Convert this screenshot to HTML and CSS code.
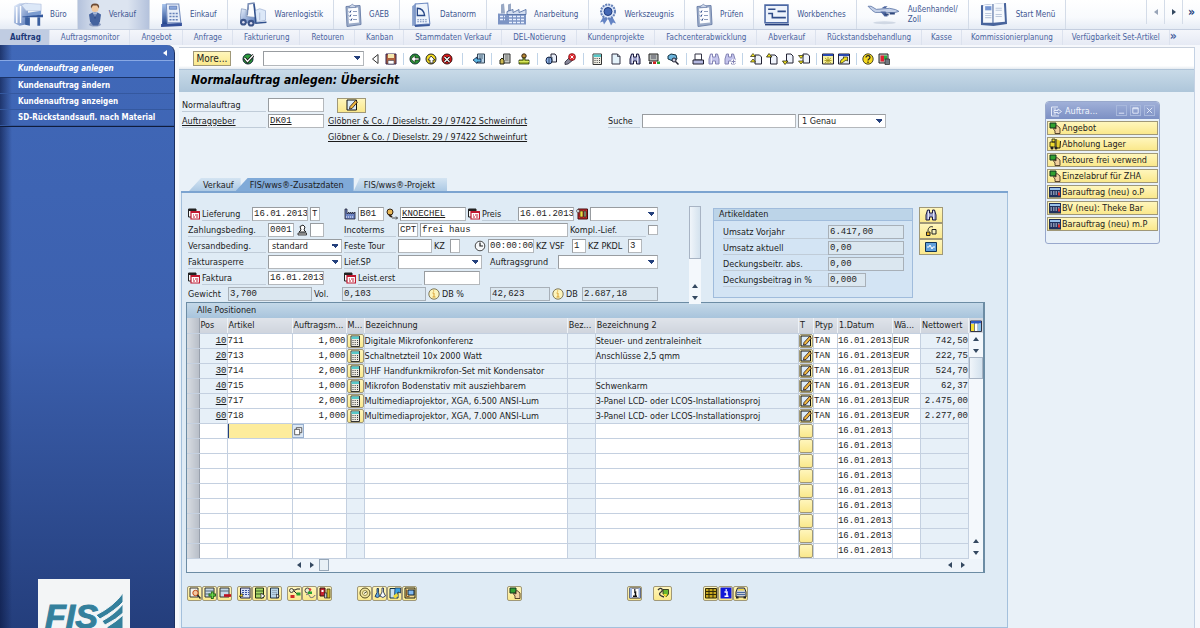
FILE: index.html
```
<!DOCTYPE html>
<html lang="de">

<head>
    <meta charset="UTF-8">
    <meta name="viewport" content="width=device-width, initial-scale=1.0">
    <title>Normalauftrag anlegen: Übersicht</title>
    <link rel="stylesheet" href="styles.css">
</head>

<body>
    <svg class="sprite" aria-hidden="true">
        <defs>
            <linearGradient id="steel" x1="0" y1="0" x2="1" y2="1">
                <stop offset="0" stop-color="#e8f0fc" />
                <stop offset="1" stop-color="#5678b8" />
            </linearGradient>
            <linearGradient id="navy" x1="0" y1="0" x2="0" y2="1">
                <stop offset="0" stop-color="#a8c4ec" />
                <stop offset="1" stop-color="#24468e" />
            </linearGradient>
        </defs>
        <!-- small icons -->
        <symbol id="i-ok" viewBox="0 0 12 12"><circle cx="6" cy="6" r="5" fill="#2c9c3c" stroke="#123" /><path d="M2.5 5l3 3.5 6-6.5" fill="none" stroke="#111" stroke-width="3" /><path d="M2.5 5l3 3.5 6-6.5" fill="none" stroke="#fff" stroke-width="1.3" /></symbol>
        <symbol id="i-prev" viewBox="0 0 12 12"><path d="M9 1.5v9L3.500 6z" fill="#fff" stroke="#333" /></symbol>
        <symbol id="i-save" viewBox="0 0 12 12"><path d="M1 1h10v10H1z" fill="#b0603c" stroke="#33204c" /><path d="M3 1h6v4H3z" fill="#f4e8b0" /><path d="M3 7.500h6V11H3z" fill="#fff" stroke="#445" stroke-width=".6" /></symbol>
        <symbol id="i-back" viewBox="0 0 12 12"><circle cx="6" cy="6" r="5" fill="#2b9432" stroke="#133" /><path d="M2 6l4-3.500V5h4v2H6v2.500z" fill="#fff" stroke="#111" stroke-width=".6" /></symbol>
        <symbol id="i-up" viewBox="0 0 12 12"><circle cx="6" cy="6" r="5" fill="#f4dc20" stroke="#222" /><path d="M6 3l4 4H8v3H5V7H3z" fill="#fff" stroke="#222" stroke-width=".8" /></symbol>
        <symbol id="i-cancel" viewBox="0 0 12 12"><circle cx="6" cy="6" r="5" fill="#e01818" stroke="#311" /><path d="M3.500 4l5 5m0-5l-5 5" stroke="#111" stroke-width="2.800" /><path d="M3.500 4l5 5m0-5l-5 5" stroke="#fff" stroke-width="1.200" /></symbol>
        <symbol id="i-session" viewBox="0 0 12 12"><path d="M4.500 1h7v9h-7z" fill="#b8d4e8" stroke="#345" /><path d="M6 3h4M6 5h4" stroke="#567" /><path d="M0 7l4-3v2h4v3H4v1.500z" fill="#5cb8e4" stroke="#124" stroke-width=".8" /></symbol>
        <symbol id="i-sheet" viewBox="0 0 12 12"><path d="M4.500 1h6.500v9h-6.500z" fill="#c8ccc8" stroke="#333" /><path d="M6 3h3.500M6 5h3.500M6 7h3.500" stroke="#555" stroke-width=".8" /><path d="M1 11V7l2-2 2 2v4z" fill="#ccb854" stroke="#221" /></symbol>
        <symbol id="i-stamp" viewBox="0 0 12 12"><circle cx="6" cy="3" r="2.200" fill="#b88834" stroke="#321" /><path d="M5 5h2v2h4v4H1V7h4z" fill="#a8b830" stroke="#231" stroke-width=".8" /><path d="M1 8.500h10" stroke="#d8e860" /></symbol>
        <symbol id="i-copyobj" viewBox="0 0 12 12"><path d="M6 1h4l1.500 2v6H6z" fill="#e8eef8" stroke="#223" /><ellipse cx="4" cy="7.500" rx="3" ry="3.500" fill="#8cb0e8" stroke="#124" /><path d="M4 4v7M7 4v5" stroke="#234" stroke-width=".8" /></symbol>
        <symbol id="i-undo" viewBox="0 0 12 12"><path d="M1 9l5-5 3 3-5 4-3 .5z" fill="#889" stroke="#223" stroke-width=".8" /><circle cx="8" cy="4" r="3.500" fill="#e02830" stroke="#611" stroke-width=".6" /><path d="M6.500 2.500l3 3m0-3l-3 3" stroke="#fff" /></symbol>
        <symbol id="i-calc" viewBox="0 0 12 12"><path d="M2 1h8.500v10.500H2z" fill="#eceae0" stroke="#333" /><path d="M2.500 1.500h7.500v2.500H2.500z" fill="#58c8c8" /><path d="M4 5v6M6.200 5v6M8.500 5v6" stroke="#444" stroke-dasharray="1 1" /></symbol>
        <symbol id="i-page" viewBox="0 0 12 12"><path d="M2 1h5.500L10 3.500V11H2z" fill="#e4f2fa" stroke="#334" /><path d="M7.500 1v2.500H10" fill="none" stroke="#334" stroke-width=".8" /></symbol>
        <symbol id="i-find" viewBox="0 0 12 12"><path d="M2.500 1h2v3h3V1h2l1.500 5v5H7.500V8h-3v3H1V6z" fill="#a0a4d0" stroke="#1c1c3c" /><path d="M3.500 2v8M8.500 2v8" stroke="#fff" stroke-width=".7" /></symbol>
        <symbol id="i-find2" viewBox="0 0 12 12"><path d="M2.500 1h2v3h3V1h2l1.500 5v5H7.500V8h-3v3H1V6z" fill="#c4c4ec" stroke="#8484b4" /><path d="M3.500 2v8" stroke="#fff" stroke-width=".7" /></symbol>
        <symbol id="i-findnext" viewBox="0 0 12 12"><path d="M2.500 1h2v3h3V1h2l1.500 5v5H7.500V8h-3v3H1V6z" fill="#c4c4ec" stroke="#8484b4" /><path d="M7 8.500h5M9.500 6v5" stroke="#fff" stroke-width="2.500" /><path d="M7.500 8.500h4M9.500 6.500v4" stroke="#8484b4" /></symbol>
        <symbol id="i-stock" viewBox="0 0 12 12"><path d="M1 1h9v7H1z" fill="#b8bcb8" stroke="#222" /><path d="M3 3h5M3 5h5" stroke="#556" /><path d="M1 9h3v2H1z" fill="#444" /><path d="M5 8.500h3V11H5z" fill="#d02020" /><path d="M9 8.500h3V11H9z" fill="#24a030" /></symbol>
        <symbol id="i-truckfind" viewBox="0 0 12 12"><path d="M1 3l3-2 5 1 1 4-4 2-5-2z" fill="#6cb4dc" stroke="#134" /><circle cx="7" cy="7" r="2" fill="#ccd" stroke="#223" /><path d="M8.500 8.500l3 3" stroke="#223" stroke-width="1.500" /></symbol>
        <symbol id="i-print" viewBox="0 0 12 12"><path d="M3 1h6.500v6H3z" fill="#fff" stroke="#334" /><path d="M1 7h10.500v4H1z" fill="#b4b8e0" stroke="#223" /></symbol>
        <symbol id="i-first" viewBox="0 0 12 12"><path d="M5 2h4.500L11.500 4v7H5z" fill="#f0f4fc" stroke="#223" /><path d="M.5 3.500h5L3 .5zM.5 9h5L3 6z" fill="#f4e420" stroke="#221" stroke-width=".7" /></symbol>
        <symbol id="i-pgup" viewBox="0 0 12 12"><path d="M4.500 2H9l2 2v7H4.500z" fill="#f0f4fc" stroke="#223" /><path d="M.5 4h5.500L3 .5z" fill="#f4e420" stroke="#221" stroke-width=".8" /></symbol>
        <symbol id="i-pgdn" viewBox="0 0 12 12"><path d="M4.500 1H9l2 2v7H4.500z" fill="#f0f4fc" stroke="#223" /><path d="M.5 8h5.500L3 11.500z" fill="#f4e420" stroke="#221" stroke-width=".8" /></symbol>
        <symbol id="i-last" viewBox="0 0 12 12"><path d="M5 1h4.500l2 2v7H5z" fill="#f0f4fc" stroke="#223" /><path d="M.5 2.500h5L3 5.500zM.5 8h5L3 11z" fill="#f4e420" stroke="#221" stroke-width=".7" /></symbol>
        <symbol id="i-newwin" viewBox="0 0 12 12"><path d="M.5 1h11v10H.5z" fill="#f6f0a0" stroke="#223" /><path d="M1 1h10v2H1z" fill="#2848b0" /><path d="M3 5l6 5m0-5l-6 5M6 4v7M2.500 7.500h7" stroke="#a09010" stroke-width=".8" /></symbol>
        <symbol id="i-shortcut" viewBox="0 0 12 12"><path d="M.5 1h11v10H.5z" fill="#e8ecf4" stroke="#223" /><path d="M1 1h10v2H1z" fill="#2848b0" /><path d="M2 10l1-3 3-2-1-1h4.500v4L8 7 4 10z" fill="#f0e020" stroke="#221" stroke-width=".7" /></symbol>
        <symbol id="i-help" viewBox="0 0 12 12"><circle cx="6" cy="6" r="5.200" fill="#f4d820" stroke="#221" stroke-width=".8" /><path d="M4 4.500C4 2 8 2 8 4.500 8 6 6 6 6 7.500M6 8.500V10" fill="none" stroke="#222" stroke-width="1.200" /></symbol>
        <symbol id="i-layout" viewBox="0 0 12 12"><path d="M1 1h9v9H1z" fill="#c8ccc8" stroke="#222" /><path d="M2.500 2.500H6v6H2.500z" fill="#e02030" /><path d="M6 2.500h3v4H6z" fill="#28b040" /><path d="M7 6h4.500v5.500H7z" fill="#707880" stroke="#222" stroke-width=".7" /></symbol>
        <symbol id="i-edit" viewBox="0 0 12 12"><path d="M1 1h9.500v10H1z" fill="#dcecf8" stroke="#111" /><path d="M9.500 1.500l2 1.500L6 9.500 3.500 10 4 7.500z" fill="#f0b840" stroke="#211" stroke-width=".8" /></symbol>
        <symbol id="i-date" viewBox="0 0 12 12"><path d="M.5 1H8v8H.5z" fill="#f8f8f8" stroke="#222" /><path d="M1 1h7v2H1z" fill="#222" /><path d="M3 3.500h8.500V11H3z" fill="#fff" stroke="#c01830" stroke-width="1.200" /><path d="M3 4.500h8" stroke="#c01830" /><path d="M5 7h1M7 7h3M5 9h2M8 9h2" stroke="#c01830" /></symbol>
        <symbol id="i-plant" viewBox="0 0 12 12"><path d="M1 1h2v5l2-2v2l2-2v2l2-2v2l2-2v7H1z" fill="#6c84c4" stroke="#223" stroke-width=".8" /><path d="M2 9h8" stroke="#fff" stroke-dasharray="1 1" /></symbol>
        <symbol id="i-partner" viewBox="0 0 12 12"><circle cx="4" cy="4" r="3" fill="#e8b858" stroke="#321" /><path d="M3 7l3 2" stroke="#321" stroke-width="2" /><path d="M6 10h5.500M10 8.500l1.500 1.500L10 11.500" fill="none" stroke="#222" stroke-width=".8" /></symbol>
        <symbol id="i-price" viewBox="0 0 12 12"><path d="M2 1h9.500v10H2z" fill="#c8282c" stroke="#411" /><path d="M4 3h3v6H4z" fill="#f0d840" stroke="#221" stroke-width=".6" /><path d="M8 3h2v6H8z" fill="#9a8" stroke="#221" stroke-width=".6" /><circle cx="2" cy="3" r="1.500" fill="#eee" stroke="#333" stroke-width=".6" /></symbol>
        <symbol id="i-user" viewBox="0 0 12 12"><path d="M4 2.500L7 1l2 2-1 3 2 2H3l2-2z" fill="#fff" stroke="#222" /><path d="M2 9h8.500v2H2z" fill="#ccc" stroke="#222" stroke-width=".8" /></symbol>
        <symbol id="i-clock" viewBox="0 0 12 12"><circle cx="6" cy="6" r="4.800" fill="#f6f8fa" stroke="#333" stroke-width=".9" /><path d="M6 2.500V6h3" fill="none" stroke="#222" stroke-width="1.200" /></symbol>
        <symbol id="i-info" viewBox="0 0 12 12"><circle cx="6" cy="6" r="5.200" fill="#fcf4bc" stroke="#665c38" stroke-width=".8" /><path d="M4.500 5H6v4M4.500 9h3M5 3h1.200" fill="none" stroke="#d8a030" /></symbol>
        <symbol id="i-flow" viewBox="0 0 12 12"><path d="M3 6c0-4 3-5 5-4" fill="none" stroke="#222" /><path d="M1.500 7H5v3.500H1.500z" fill="#e8b020" stroke="#222" /><path d="M7 4.500h4V9H7z" fill="#f4f0c0" stroke="#222" /></symbol>
        <symbol id="i-screen" viewBox="0 0 12 12"><path d="M.5 1.500h11v9H.5z" fill="#60a0dc" stroke="#135" /><path d="M2 6h2l1-2 2 4 1-2h2" fill="none" stroke="#fff" /></symbol>
        <symbol id="i-copy" viewBox="0 0 12 12"><path d="M4 2h6.500v6H4z" fill="#fff" stroke="#444" /><path d="M2 4h6v6.500H2z" fill="#fff" stroke="#444" /></symbol>
        <symbol id="i-cols" viewBox="0 0 12 12"><path d="M.5 1h11v10.500H.5z" fill="#fff" stroke="#334" /><path d="M1 1h10v2.500H1z" fill="#2c58c0" /><path d="M1 4h3.500v7H1z" fill="#f4dc30" /><path d="M4.500 3v8M8 3v8" stroke="#456" stroke-width=".7" /><path d="M8.300 4H11v7H8.300z" fill="#8cc4f0" /></symbol>
        <symbol id="i-hand" viewBox="0 0 12 12"><path d="M1 1h6v5H1z" fill="#30a030" stroke="#132" /><path d="M6 11.500V9L4.500 7 5 6l2 1V4l1-.5L11 6v5.500z" fill="#f0d0a0" stroke="#321" stroke-width=".8" /></symbol>
        <symbol id="i-fork" viewBox="0 0 12 12"><path d="M1 4h5v5H1zM3 1h3v3H3z" fill="#f0dc30" stroke="#221" stroke-width=".8" /><path d="M7 1v9h4L11.500 3" fill="#e4cc30" stroke="#221" /><circle cx="3" cy="10" r="1.500" fill="#222" /><circle cx="7" cy="10" r="1.500" fill="#222" /></symbol>
        <symbol id="i-cash" viewBox="0 0 12 12"><path d="M0 1h12v10.500H0z" fill="#20305c" /><path d="M1 2h10v2H1z" fill="#98c0e8" /><path d="M1.500 6h9M1.500 8h9" stroke="#e8f0fc" stroke-dasharray="1.500 1" /><path d="M9 6.500h2v3H9z" fill="#e03030" /></symbol>
        <symbol id="i-zoom" viewBox="0 0 12 12"><path d="M1 1h8v9H1z" fill="#f4f4ee" stroke="#333" /><circle cx="6.500" cy="6" r="2.700" fill="#f4c8a0" stroke="#c04818" /><path d="M8.500 8l3 3.500" stroke="#222" stroke-width="1.500" /></symbol>
        <symbol id="i-add" viewBox="0 0 12 12"><path d="M1 1h9v9H1z" fill="#c4d8e8" stroke="#333" /><path d="M1 4h9M1 7h5" stroke="#567" /><path d="M4.500 8H12M8.300 4.500v7.500" stroke="#286818" stroke-width="2.800" /><path d="M5.500 8h5.500M8.300 5.500v5.500" stroke="#70e050" stroke-width="1.200" /></symbol>
        <symbol id="i-del" viewBox="0 0 12 12"><path d="M1 1h9v9H1z" fill="#c4d8e8" stroke="#333" /><path d="M1 4h9" stroke="#567" /><path d="M5 8.500h7" stroke="#c01020" stroke-width="2.600" /></symbol>
        <symbol id="i-list" viewBox="0 0 12 12"><path d="M1.500 1h9.500v10H1.500z" fill="#d8e0f8" stroke="#224" /><path d="M3 3.500h7M3 5.500h7M3 7.500h7" stroke="#3850a0" stroke-dasharray="2 1" /><path d="M0 9.500l3-3 1 3z" fill="#f0d020" stroke="#332" stroke-width=".6" /></symbol>
        <symbol id="i-glist" viewBox="0 0 12 12"><path d="M1.500 1h8v10h-8z" fill="#a8d868" stroke="#231" /><path d="M2 4h7M2 7h7" stroke="#385820" /><path d="M7 6l4 3-4 2.500z" fill="#fff" stroke="#222" stroke-width=".7" /></symbol>
        <symbol id="i-blist" viewBox="0 0 12 12"><path d="M1.500 1h8v10h-8z" fill="#b8d4e8" stroke="#234" /><path d="M3 3.500h5M3 5.500h5M3 7.500h5" stroke="#89a" stroke-width=".7" /><path d="M7.500 7l3 2-3 2z" fill="#fff" stroke="#222" stroke-width=".7" /></symbol>
        <symbol id="i-status" viewBox="0 0 12 12"><path d="M2 3h4l2-1h3M5 4l3 3" fill="none" stroke="#222" /><circle cx="2.500" cy="3.500" r="2" fill="#eec" stroke="#222" stroke-width=".8" /><path d="M1.500 8h4v3h-4z" fill="#d02828" /><path d="M7.500 5.500h4v3h-4z" fill="#28a030" /></symbol>
        <symbol id="i-chain" viewBox="0 0 12 12"><circle cx="3.500" cy="3.500" r="2.500" fill="#e8ecd0" stroke="#222" stroke-width=".8" /><path d="M2 8c2-2 4 1 4 2s4 1 5-2" fill="none" stroke="#667" /><path d="M4 4.500h4v2.500H4z" fill="#28a030" /><circle cx="6" cy="2.500" r="1.300" fill="#e03838" /></symbol>
        <symbol id="i-books" viewBox="0 0 12 12"><path d="M1 1h5v8H1z" fill="#c82430" stroke="#311" /><path d="M2.500 3h2v2h-2z" fill="#fff" /><path d="M5.500 6h2.500v5H5.500z" fill="#c0c8d0" stroke="#222" stroke-width=".7" /><path d="M8 2h3v9H8z" fill="#d0b828" stroke="#221" stroke-width=".7" /></symbol>
        <symbol id="i-coin" viewBox="0 0 12 12"><circle cx="6" cy="6" r="5" fill="#f0e4a0" stroke="#554c20" /><circle cx="6" cy="6" r="2.500" fill="#fff8d0" stroke="#887830" stroke-width=".8" /><path d="M5 6.500l3-2" stroke="#554" /></symbol>
        <symbol id="i-flasks" viewBox="0 0 12 12"><path d="M3 1.500v4L1 9.500q2.500 2 4.500 0L4.500 5.500v-4z" fill="#60a8e0" stroke="#124" stroke-width=".8" /><path d="M8 1v4L6 9q3 3 5.500 0L9.500 5V1z" fill="#f8fcff" stroke="#124" stroke-width=".8" /></symbol>
        <symbol id="i-note" viewBox="0 0 12 12"><path d="M1 1.500h8v9.500H1z" fill="#c8e0f0" stroke="#134" /><path d="M6 1h5.500v5L9 5l-2 5-1.500-1z" fill="#38a0e0" stroke="#124" stroke-width=".7" /><path d="M4 9l4-3 1 3-3 2.500z" fill="#f4dc30" /></symbol>
        <symbol id="i-safe" viewBox="0 0 12 12"><path d="M1 1h10v10H1z" fill="#f0d890" stroke="#221" /><path d="M4 3h6v5H4z" fill="#80b8f0" stroke="#123" /><path d="M2.500 2.500v7h3" fill="none" stroke="#8c5c24" /></symbol>
        <symbol id="i-ibox" viewBox="0 0 12 12"><path d="M.5 1h11v10H.5z" fill="#fff" stroke="#223" /><path d="M.5 1h2.500v10H.5zM9.500 1h2v10h-2z" fill="#9cb4e0" /><path d="M5 5h1.500v4M4 9.200h4M5 3h1.500" fill="none" stroke="#111" stroke-width="1.500" /></symbol>
        <symbol id="i-iblue" viewBox="0 0 12 12"><path d="M.5 .5h11v11H.5z" fill="#1018d8" /><path d="M4.500 5H7v4M4.500 9.200h4M5.500 3H7" fill="none" stroke="#fff" stroke-width="1.500" /></symbol>
        <symbol id="i-shield" viewBox="0 0 12 12"><path d="M1 3c3-4 6 0 3 2s-1 4 3 5" fill="none" stroke="#333" stroke-width="1.300" /><path d="M6 2.500h5.500V7L9 10 6 7z" fill="#68b830" stroke="#221" stroke-width=".8" /><path d="M6 7h4l-1 3.500z" fill="#f4e030" /></symbol>
        <symbol id="i-grid" viewBox="0 0 12 12"><path d="M.5 1.500h11v9.500H.5z" fill="#c8a820" stroke="#332c08" /><path d="M.5 4.500h11M.5 7.500h11M4 1.500V11M8 1.500V11" stroke="#332c08" /></symbol>
        <symbol id="i-car" viewBox="0 0 12 12"><path d="M2.500 1h7L11 5v5H1V5z" fill="#c8ccd4" stroke="#222" /><path d="M3 2h6v1.500H3z" fill="#f0d840" /><path d="M2 5.500h8M2 7.500h8" stroke="#4868a0" /><path d="M1 9.500h2.500v2H1zM8.500 9.500H11v2H8.500z" fill="#222" /></symbol>
        <symbol id="i-exit" viewBox="0 0 12 12"><path d="M8 2H1.500v9H9M3.500 4H6M3.500 9H6M4 5.500h4V4l3.500 2.500L8 9V7.500H4z" fill="none" stroke="#e4eaf8" /></symbol>
        <!-- big navigation icons -->
        <symbol id="n-buero" viewBox="0 0 32 26"><path d="M1 4l6-3h9v22l-9 2-6-3z" fill="url(#steel)" /><path d="M4 5v17M8 4v18" stroke="#fff" stroke-width="1.500" /><path d="M9 3l4-2 17 1v7H14z" fill="#dce8f8" stroke="#a8b8d8" stroke-width=".6" /><path d="M16 11l14-2v4l-14 3z" fill="#7c9cd0" /><path d="M10 15l22-2v3H10z" fill="#34589c" /><path d="M13 16h5v9l-5-1zM26 16h3v9h-3z" fill="#3c609f" /></symbol>
        <symbol id="n-mann" viewBox="0 0 14 24"><ellipse cx="7" cy="22" rx="6" ry="2" fill="#8c9cc0" /><path d="M1 12q6-5 12 0l-1 7-2 4H5l-3-4z" fill="#45639f" /><path d="M5 10h4l-2 5z" fill="#d8e4f8" /><path d="M7 11v5" stroke="#203c7c" /><circle cx="7" cy="6" r="3.500" fill="#f0c8a0" /><path d="M3 6q-1-5 4-5t4 5l-2-3H5z" fill="#6c4830" /></symbol>
        <symbol id="n-telefon" viewBox="0 0 22 24"><path d="M1 21l20-1v3l-20 1z" fill="#34509a" /><path d="M2 2h4l1 19H2z" fill="url(#navy)" /><path d="M6 2h12l2 18H7z" fill="#e8eef8" stroke="#7890c0" /><path d="M9 4h7v3H9z" fill="#8ca8dc" stroke="#4868a8" stroke-width=".6" /><path d="M9 11h8M9 14h8M9 17h9" stroke="#6480b8" stroke-width="1.500" stroke-dasharray="2 1" /></symbol>
        <symbol id="n-stapler" viewBox="0 0 28 26"><path d="M9 8V2l6-1 2 13M9 2l-1 12" fill="none" stroke="#788cb4" stroke-width="1.500" /><path d="M2 7l5 1v7l9 1v6L1 21v-7z" fill="url(#steel)" stroke="#506c9c" stroke-width=".5" /><path d="M16 9l5-2 6 2v10l-9 2z" fill="#dce8f8" stroke="#8ca0c8" stroke-width=".6" /><path d="M21 11v8" stroke="#b0c0dc" /><path d="M15 2l2 20 11-1" fill="none" stroke="#30508c" stroke-width="1.500" /><circle cx="4" cy="21" r="3.500" fill="#3c5488" /><circle cx="12" cy="22" r="3.500" fill="#3c5488" /><circle cx="4" cy="21" r="1.300" fill="#dde" /><circle cx="12" cy="22" r="1.300" fill="#dde" /></symbol>
        <symbol id="n-klemm" viewBox="0 0 18 24"><path d="M2 4l14-1 1 19-14 2z" fill="#9cacc8" stroke="#7084ac" /><path d="M4 6l10-1 1 15-10 1z" fill="#fcfdff" /><path d="M5 5q0-2 2-2 1-3 3 0 2 0 2 2z" fill="#ccd6e8" stroke="#6478a4" stroke-width=".6" /><path d="M5 9l1 1 1-2M5 13l1 1 1-2M6 17l1 1 1-2" fill="none" stroke="#34508c" /><path d="M9 9h4M9 13h4M9 17h4" stroke="#8c9cbc" /></symbol>
        <symbol id="n-datanorm" viewBox="0 0 20 24"><path d="M1 4l4-3v21l-4 1z" fill="#88a0cc" /><path d="M4 2l12-1 2 20-14 1z" fill="#eef4fc" stroke="#6c88c0" /><path d="M6 13V6q6 0 7 7z" fill="none" stroke="#284888" stroke-width="1.300" /><path d="M6 17h9M6 19h9" stroke="#7088b8" stroke-dasharray="1.500 1" /><path d="M3 22l15-1v2l-14 1z" fill="#3c5a9c" /></symbol>
        <symbol id="n-fabrik" viewBox="0 0 30 24"><path d="M4 2l3-1 1 10H4zM11 2l3-1v10h-3z" fill="#98a8c4" /><path d="M1 11l15 1 13-1v11H1z" fill="#7c94c4" /><path d="M10 9l6-2v3l6-3v3l7-3v5H10z" fill="#d4def0" stroke="#48649c" stroke-width=".8" /><path d="M3 14h5M12 14h15M3 17h5M12 17h15M12 20h15" stroke="#e8f0ff" stroke-width="1.300" stroke-dasharray="3 1" /></symbol>
        <symbol id="n-siegel" viewBox="0 0 18 24"><path d="M5 13l-4 7 3-1 1 3 4-6 3 7 2-3 3 1-5-9z" fill="#6484c4" /><circle cx="9" cy="9" r="7" fill="#dce6f8" stroke="#6480b8" stroke-width="2" stroke-dasharray="2 1" /><circle cx="9" cy="9" r="4" fill="#4468b4" stroke="#203c80" /></symbol>
        <symbol id="n-tafel" viewBox="0 0 25 22"><path d="M1 2h22v17H1z" fill="#eef3fb" stroke="#4c68a4" stroke-width="1.500" /><path d="M4 6h7M4 10h4v4h13M13 8h8" fill="none" stroke="#304c88" stroke-width="1.500" /><path d="M1 20h23v1.500H1z" fill="#28407c" /></symbol>
        <symbol id="n-flug" viewBox="0 0 33 22"><path d="M1 3l3 0 5 3 13-1q7 1 9 3-4 2-11 1L8 9 5 7z" fill="#c4d0e8" stroke="#6078a8" stroke-width=".8" /><path d="M13 8l4 5h3l-2-5zM14 5l3-2h3l-2 2z" fill="#5068a0" /><path d="M17 11h4M22 10h5" stroke="#30487c" stroke-width="2" /><ellipse cx="17" cy="19" rx="11" ry="1.500" fill="#d0d8e4" /></symbol>
        <symbol id="n-buch" viewBox="0 0 27 24"><path d="M1 3l11-1h1l12-1 1 20-13 2-12-1z" fill="#48649c" /><path d="M3 3l9-1v18H3z" fill="#f6f9fd" /><path d="M13 2l10-1 1 18-11 1z" fill="#f6f9fd" /><path d="M5 4h6v4H5z" fill="#7898d4" /><path d="M5 11h6M5 13h6M5 15h6M15 6h6M15 8h6M15 12h6M15 14h6" stroke="#bcc8dc" /></symbol>
    </svg>

    <nav class="main-nav">
        <ul id="main-nav"></ul>
        <div class="nav-arrows">
            <button aria-label="Zurück"><span class="tri left dim"></span></button>
            <button aria-label="Weiter"><span class="tri right"></span></button>
            <button aria-label="Mehr">»</button>
        </div>
    </nav>
    <nav class="sub-nav">
        <ul id="sub-nav"></ul>
    </nav>

    <div class="layout">
        <aside class="sidebar">
            <button class="collapse" aria-label="Einklappen"><span class="tri left"></span></button>
            <ul>
                <li class="active"><a href="#anlegen">Kundenauftrag anlegen</a></li>
                <li><a href="#aendern">Kundenauftrag ändern</a></li>
                <li><a href="#anzeigen">Kundenauftrag anzeigen</a></li>
                <li><a href="#rueckstand">SD-Rückstandsaufl. nach Material</a></li>
            </ul>
            <div class="logo">
                <svg viewBox="0 0 92 49" role="img">
                    <text x="7" y="49" class="logo-text">FIS</text>
                    <path d="M85 14q-9 13-27 22l4 4q16-9 23-17z" class="logo-mark" />
                    <path d="M85 25q-8 10-21 17l3 4q12-6 18-12z" class="logo-mark" />
                    <path d="M85 36q-6 6-16 12v2h16z" class="logo-mark" />
                </svg>
            </div>
        </aside>

        <main>
            <div class="toolbar">
                <button class="yellow more">More...</button>
                <button class="ok" aria-label="Enter"><svg><use href="#i-ok" /></svg></button>
                <select class="command" aria-label="Befehl"><option></option></select>
                <div class="tools" id="tools"></div>
            </div>
            <h1>Normalauftrag anlegen: Übersicht</h1>

            <div class="content">
                <section class="head-form">
                    <div class="row">
                        <label class="w84 line" for="auftrag">Normalauftrag</label>
                        <input class="w56" id="auftrag">
                        <button class="yellow change" aria-label="Ändern"><svg><use href="#i-edit" /></svg></button>
                    </div>
                    <div class="row">
                        <label class="w84 line under" for="geber">Auftraggeber</label>
                        <input class="w56 under" id="geber" value="DK01">
                        <a class="address" href="#partner">Glöbner &amp; Co. / Dieselstr. 29 / 97422 Schweinfurt</a>
                        <label class="search-label line" for="suche">Suche</label>
                        <input class="search" id="suche">
                        <select class="match" aria-label="Suchart"><option>1 Genau</option></select>
                    </div>
                    <div class="row">
                        <a class="address second" href="#empfaenger">Glöbner &amp; Co. / Dieselstr. 29 / 97422 Schweinfurt</a>
                    </div>
                </section>

                <div class="tabs">
                    <button>Verkauf</button>
                    <button class="active">FIS/wws®-Zusatzdaten</button>
                    <button>FIS/wws®-Projekt</button>
                </div>

                <section class="panel">
                    <div class="details">
                        <form>
                            <div class="row">
                                <div class="col-a">
                                    <svg><use href="#i-date" /></svg><label class="grow line" for="lief">Lieferung</label>
                                    <input class="w56" id="lief" value="16.01.2013"><input class="w10" value="T" aria-label="Art"><span class="w20"></span>
                                </div>
                                <div class="col-b">
                                    <svg><use href="#i-plant" /></svg><input class="w26" value="B01" aria-label="Werk">
                                    <svg><use href="#i-partner" /></svg><input class="w66 under" value="KNOECHEL" aria-label="Partner">
                                    <svg><use href="#i-date" /></svg><label class="w34 line" for="preis">Preis</label>
                                    <input class="w56" id="preis" value="16.01.2013"><svg><use href="#i-price" /></svg>
                                    <select class="grow" aria-label="Preisart"><option></option></select>
                                </div>
                            </div>
                            <div class="row">
                                <div class="col-a">
                                    <label class="w78 line" for="zahl">Zahlungsbeding.</label>
                                    <input class="w26" id="zahl" value="0001"><svg><use href="#i-user" /></svg><input class="w14" aria-label="Kennzeichen">
                                </div>
                                <div class="col-b">
                                    <label class="w52 line" for="inco">Incoterms</label>
                                    <input class="w20" id="inco" value="CPT"><input class="w148" value="frei haus" aria-label="Ort">
                                    <label class="grow line" for="kompl">Kompl.-Lief.</label><input type="checkbox" id="kompl">
                                </div>
                            </div>
                            <div class="row">
                                <div class="col-a">
                                    <label class="w78 line" for="versand">Versandbeding.</label>
                                    <select class="grow" id="versand"><option>standard</option></select>
                                </div>
                                <div class="col-b">
                                    <label class="w52 line" for="tour">Feste Tour</label>
                                    <input class="w34" id="tour"><label class="w14" for="kz">KZ</label><input class="w10" id="kz">
                                    <span class="w10"></span><svg><use href="#i-clock" /></svg>
                                    <input class="w46" value="00:00:00" aria-label="Uhrzeit"><label class="w34" for="vsf">KZ VSF</label>
                                    <input class="w14" id="vsf" value="1"><label class="w38" for="pkdl">KZ PKDL</label><input class="w14" id="pkdl" value="3">
                                </div>
                            </div>
                            <div class="row">
                                <div class="col-a">
                                    <label class="w78 line" for="sperre">Fakturasperre</label>
                                    <select class="grow" id="sperre"><option></option></select>
                                </div>
                                <div class="col-b">
                                    <label class="w52 line" for="sp">Lief.SP</label>
                                    <select class="w84" id="sp"><option></option></select>
                                    <span class="w4"></span><label class="w66 line" for="grund">Auftragsgrund</label>
                                    <select class="grow" id="grund"><option></option></select>
                                </div>
                            </div>
                            <div class="row">
                                <div class="col-a">
                                    <svg><use href="#i-date" /></svg><label class="w64 line" for="fakt">Faktura</label>
                                    <input class="w56" id="fakt" value="16.01.2013">
                                </div>
                                <div class="col-b">
                                    <svg><use href="#i-date" /></svg><label class="w64 line" for="erst">Leist.erst</label>
                                    <input class="w56" id="erst">
                                </div>
                            </div>
                            <div class="row">
                                <div class="col-a">
                                    <label class="w38" for="gew">Gewicht</label>
                                    <input class="w84" id="gew" value="3,700" readonly><label class="grow" for="vol">Vol.</label>
                                </div>
                                <div class="col-b">
                                    <input class="w84" id="vol" value="0,103" readonly><svg><use href="#i-info" /></svg>
                                    <label class="w46" for="dbp">DB %</label>
                                    <input class="w60" id="dbp" value="42,623" readonly><svg><use href="#i-info" /></svg>
                                    <label class="w14" for="db">DB</label><input class="w76" id="db" value="2.687,18" readonly>
                                </div>
                            </div>
                        </form>

                        <div class="vscroll form-scroll">
                            <div class="thumb"></div>
                            <span class="space"></span>
                            <button aria-label="Nach oben"><span class="tri up"></span></button>
                            <button aria-label="Nach unten"><span class="tri down"></span></button>
                        </div>

                        <fieldset class="article">
                            <legend>Artikeldaten</legend>
                            <div class="row"><label class="line" for="uv">Umsatz Vorjahr</label><input class="w76" id="uv" value="6.417,00" readonly></div>
                            <div class="row"><label class="line" for="ua">Umsatz aktuell</label><input class="w76" id="ua" value="0,00" readonly></div>
                            <div class="row"><label class="line" for="da">Deckungsbeitr. abs.</label><input class="w76" id="da" value="0,00" readonly></div>
                            <div class="row"><label class="line" for="dp">Deckungsbeitrag in %</label><input class="w38" id="dp" value="0,000" readonly></div>
                        </fieldset>

                        <div class="side-buttons">
                            <button class="yellow" aria-label="Suchen"><svg><use href="#i-find" /></svg></button>
                            <button class="yellow" aria-label="Belegfluss"><svg><use href="#i-flow" /></svg></button>
                            <button class="yellow" aria-label="Verfügbarkeit"><svg><use href="#i-screen" /></svg></button>
                        </div>
                    </div>

                    <div class="positions">
                        <h2>Alle Positionen</h2>
                        <div class="grid-wrap">
                            <table>
                                <colgroup>
                                    <col class="c-sel"><col class="c-pos"><col class="c-art"><col class="c-qty"><col class="c-m"><col class="c-name"><col class="c-bez"><col class="c-name"><col class="c-t"><col class="c-typ"><col class="c-date"><col class="c-cur"><col class="c-net">
                                </colgroup>
                                <thead>
                                    <tr>
                                        <th></th><th>Pos</th><th>Artikel</th><th>Auftragsm...</th><th>M...</th><th>Bezeichnung</th><th>Bez...</th><th>Bezeichnung 2</th><th>T</th><th>Ptyp</th><th>1.Datum</th><th>Wä...</th><th>Nettowert</th>
                                    </tr>
                                </thead>
                                <tbody id="rows"></tbody>
                            </table>
                            <div class="vscroll">
                                <button class="config" aria-label="Spalten"><svg><use href="#i-cols" /></svg></button>
                                <button aria-label="Zeile hoch"><span class="tri up"></span></button>
                                <button aria-label="Zeile runter"><span class="tri down"></span></button>
                                <div class="thumb"></div>
                                <span class="space"></span>
                                <button aria-label="Seite hoch"><span class="tri up"></span></button>
                                <button aria-label="Seite runter"><span class="tri down"></span></button>
                            </div>
                        </div>
                        <div class="hscroll">
                            <button aria-label="Links"><span class="tri left"></span></button>
                            <button aria-label="Rechts"><span class="tri right"></span></button>
                            <div class="thumb"></div>
                            <span class="space"></span>
                            <button aria-label="Links"><span class="tri left"></span></button>
                            <button aria-label="Rechts"><span class="tri right"></span></button>
                        </div>
                    </div>

                    <div class="actions" id="actions"></div>
                </section>
            </div>
        </main>
    </div>

    <div class="palette">
        <header>
            <svg><use href="#i-exit" /></svg>
            <span>Auftra...</span>
            <button aria-label="Minimieren"><svg viewBox="0 0 10 10"><path d="M2 8h6" /></svg></button>
            <button aria-label="Maximieren"><svg viewBox="0 0 10 10"><path d="M2 2h6v6H2zM2 3h6" /></svg></button>
            <button aria-label="Schließen"><svg viewBox="0 0 10 10"><path d="M2 2l6 6m0-6L2 8" /></svg></button>
        </header>
        <button class="yellow"><svg><use href="#i-hand" /></svg>Angebot</button>
        <button class="yellow"><svg><use href="#i-fork" /></svg>Abholung Lager</button>
        <button class="yellow"><svg><use href="#i-hand" /></svg>Retoure frei verwend</button>
        <button class="yellow"><svg><use href="#i-hand" /></svg>Einzelabruf für ZHA</button>
        <button class="yellow"><svg><use href="#i-cash" /></svg>Barauftrag (neu) o.P</button>
        <button class="yellow"><svg><use href="#i-cash" /></svg>BV (neu): Theke Bar</button>
        <button class="yellow"><svg><use href="#i-cash" /></svg>Barauftrag (neu) m.P</button>
    </div>

    <script>
        const icon = name => `<svg><use href="#${name}" /></svg>`;

        // main navigation: label, icon, icon size class
        const modules = [
            ['Büro', 'n-buero', 'wide'], ['Verkauf', 'n-mann', 'slim'], ['Einkauf', 'n-telefon', 'mid'],
            ['Warenlogistik', 'n-stapler', 'wide'], ['GAEB', 'n-klemm', 'small'], ['Datanorm', 'n-datanorm', 'mid'],
            ['Anarbeitung', 'n-fabrik', 'wide'], ['Werkszeugnis', 'n-siegel', 'small'], ['Prüfen', 'n-klemm', 'small'],
            ['Workbenches', 'n-tafel', 'board'], ['Außenhandel/<br>Zoll', 'n-flug', 'plane'], ['Start Menü', 'n-buch', 'wide']
        ];
        document.getElementById('main-nav').innerHTML = modules.map(([label, name, size], i) =>
            `<li class="${i === 1 ? 'active' : ''}"><a href="#m${i}"><svg class="${size}"><use href="#${name}" /></svg><span>${label}</span></a></li>`
        ).join('');

        const pages = ['Auftrag', 'Auftragsmonitor', 'Angebot', 'Anfrage', 'Fakturierung', 'Retouren', 'Kanban',
            'Stammdaten Verkauf', 'DEL-Notierung', 'Kundenprojekte', 'Fachcenterabwicklung', 'Abverkauf',
            'Rückstandsbehandlung', 'Kasse', 'Kommissionierplanung', 'Verfügbarkeit Set-Artikel', '»'];
        document.getElementById('sub-nav').innerHTML = pages.map((label, i) =>
            `<li class="${i === 0 ? 'active' : ''}"><a href="#p${i}">${label}</a></li>`
        ).join('');

        // toolbar groups are split by a thin line
        const tools = [['prev', 'save'], ['back', 'up', 'cancel'], ['session'], ['sheet', 'stamp'], ['copyobj', 'undo'],
            ['calc', 'page', 'find', 'stock', 'truckfind'], ['print', 'find2', 'findnext'],
            ['first', 'pgup', 'pgdn', 'last'], ['newwin', 'shortcut'], ['help', 'layout']];
        document.getElementById('tools').innerHTML = tools.map(group =>
            `<div class="group ${group[0]}">${group.map(t => `<button aria-label="${t}">${icon('i-' + t)}</button>`).join('')}</div>`
        ).join('');

        const actions = [['zoom', 'add', 'del'], ['list', 'glist', 'blist'], ['status', 'chain', 'books'],
            ['coin', 'flasks', 'note', 'safe'], ['hand'], ['ibox'], ['shield'], ['grid', 'iblue', 'car']];
        document.getElementById('actions').innerHTML = actions.map(group =>
            `<div class="group ${group[0]}">${group.map(t => `<button class="yellow" aria-label="${t}">${icon('i-' + t)}</button>`).join('')}</div>`
        ).join('');

        const positions = [
            [10, '711', '1,000', 'Digitale Mikrofonkonferenz', 'Steuer- und zentraleinheit', '742,50'],
            [20, '713', '1,000', 'Schaltnetzteil 10x 2000 Watt', 'Anschlüsse 2,5 qmm', '222,75'],
            [30, '714', '2,000', 'UHF Handfunkmikrofon-Set mit Kondensator', '', '524,70'],
            [40, '715', '1,000', 'Mikrofon Bodenstativ mit ausziehbarem', 'Schwenkarm', '62,37'],
            [50, '717', '2,000', 'Multimediaprojektor, XGA, 6.500 ANSI-Lum', '3-Panel LCD- oder LCOS-Installationsproj', '2.475,00'],
            [60, '718', '1,000', 'Multimediaprojektor, XGA, 7.000 ANSI-Lum', '3-Panel LCD- oder LCOS-Installationsproj', '2.277,00']
        ];
        const filled = positions.map(([pos, art, qty, bez, bez2, net]) => `
            <tr>
                <td class="sel"></td><td class="num ro"><a href="#pos${pos}">${pos}</a></td><td class="mono">${art}</td><td class="num">${qty}</td>
                <td class="ro"><button class="yellow" aria-label="Menge">${icon('i-calc')}</button></td>
                <td class="ro">${bez}</td><td class="ro"></td><td class="ro">${bez2}</td>
                <td><button class="yellow" aria-label="Text">${icon('i-edit')}</button></td>
                <td class="mono">TAN</td><td class="mono">16.01.2013</td><td class="mono">EUR</td><td class="num ro">${net}</td>
            </tr>`);
        const empty = Array.from({ length: 9 }, (_, i) => `
            <tr>
                <td class="sel"></td><td></td>
                <td>${i === 0 ? '<div class="entry"><input aria-label="Artikel" id="entry"><button aria-label="Werthilfe">' + icon('i-copy') + '</button></div>' : ''}</td>
                <td></td><td class="ro"></td><td></td><td class="ro"></td><td></td>
                <td><button class="yellow" aria-label="Text"></button></td>
                <td></td><td class="mono">16.01.2013</td><td></td><td class="ro"></td>
            </tr>`);
        document.getElementById('rows').innerHTML = filled.concat(empty).join('');
    </script>
</body>

</html>
```
FILE: styles.css
```
* {
    box-sizing: border-box;
}

body {
    margin: 0;
    height: 100vh;
    display: flex;
    flex-direction: column;
    overflow: hidden;
    background: #f6f8fc;
    color: #1c1c1c;
    font-family: "DejaVu Sans Condensed", "DejaVu Sans", sans-serif;
    font-size: 9px;
    line-height: 12px;
}

ul {
    list-style: none;
    margin: 0;
    padding: 0;
}

a {
    color: inherit;
    text-decoration: none;
}

svg {
    display: block;
    flex: none;
    width: 12px;
    height: 12px;
}

.sprite {
    position: absolute;
    width: 0;
    height: 0;
}

button,
input,
select {
    font: inherit;
    color: inherit;
    margin: 0;
    padding: 0;
    border-radius: 0;
    min-width: 0;
}

button {
    display: flex;
    align-items: center;
    justify-content: center;
    border: none;
    background: none;
}

input,
select {
    height: 14px;
    border: 1px solid #b4b8bc;
    border-top-color: #989ca0;
    border-left-color: #989ca0;
    background-color: #fff;
    outline: none;
}

input {
    padding-left: 1px;
    font-family: "Liberation Mono", monospace;
}

input[readonly] {
    background: #dbe7f0;
    border-color: #a8b0b8;
}

select {
    appearance: none;
    padding: 0 12px 0 3px;
    background-image: conic-gradient(from -45deg at 50% 100%, #24407c 90deg, transparent 0);
    background-size: 6px 4px;
    background-position: right 3px top 4px;
    background-repeat: no-repeat;
}

.tri {
    border: 3px solid transparent;
    width: 0;
    height: 0;
}

.tri.left {
    border-right: 4px solid #344860;
    border-left: none;
}

.tri.right {
    border-left: 4px solid #344860;
    border-right: none;
}

.tri.up {
    border-bottom: 4px solid #344860;
    border-top: none;
}

.tri.down {
    border-top: 4px solid #344860;
    border-bottom: none;
}

.tri.dim {
    border-right-color: #98a4b8;
}

.yellow {
    border: 1px solid #a09878;
    background: linear-gradient(#fff6bc, #fae88c);
}

/* navigation */

.main-nav {
    display: flex;
    flex: none;
    height: 30px;
    background: linear-gradient(#fff, #f8fafd 60%, #e6ecf5);
    border-bottom: 1px solid #c4cedf;
    color: #3c5590;
    font-size: 8px;
    line-height: 10px;
}

.main-nav ul {
    display: flex;
    flex: 1;
}

.main-nav li {
    border-right: 1px solid #d4dce8;
}

.main-nav li:first-child {
    padding-left: 3px;
}

.main-nav a {
    display: flex;
    align-items: center;
    gap: 7px;
    height: 29px;
    padding: 0 10px;
}

.main-nav .active {
    padding-right: 3px;
    background: linear-gradient(90deg, #b4c2dc, #dce4f0 30%, #dce4f0 70%, #b4c2dc);
}

.main-nav svg {
    height: 25px;
}

.main-nav svg.plane {
    width: 34px;
}

.main-nav svg.wide {
    width: 30px;
}

.main-nav svg.board {
    width: 26px;
}

.main-nav svg.mid {
    width: 23px;
}

.main-nav svg.small {
    width: 18px;
}

.main-nav svg.slim {
    width: 14px;
}

.nav-arrows {
    display: flex;
    font-size: 12px;
    font-weight: bold;
}

.nav-arrows button {
    width: 18px;
    height: 24px;
    border-left: 1px solid #d4dce8;
    color: #24407c;
}

.sub-nav {
    flex: none;
    height: 15px;
    background: linear-gradient(#f4f6fb, #e6eaf4);
    color: #4a64a0;
    font-size: 8px;
    line-height: 15px;
}

.sub-nav ul {
    display: flex;
}

.sub-nav li {
    padding: 0 10px 0 11px;
    border-right: 1px solid #dce2ee;
    white-space: nowrap;
}

.sub-nav li:first-child {
    padding: 0 8px 0 10px;
}

.sub-nav li:nth-last-child(-n+4) {
    padding: 0 9px;
}

.sub-nav li:last-child {
    padding: 0;
    border: none;
    font-size: 12px;
    font-weight: bold;
    line-height: 12px;
}

.sub-nav .active {
    background: #c0cce2;
    color: #1c3878;
    font-weight: bold;
}

.layout {
    flex: 1;
    display: flex;
    gap: 4px;
    min-height: 0;
    padding-right: 5px;
}

/* sidebar */

.sidebar {
    flex: none;
    width: 175px;
    display: flex;
    flex-direction: column;
    border-radius: 0 8px 0 0;
    border-right: 1px solid #1c3060;
    background: linear-gradient(90deg, rgba(8, 20, 60, 0.6), transparent 12px), linear-gradient(#4068b8, #3c60ae 50%, #243e7c);
    color: #fff;
    font-size: 8px;
    font-weight: bold;
}

.collapse {
    justify-content: flex-end;
    height: 15px;
    padding-right: 7px;
}

.collapse .tri.left {
    border-right-color: #fff;
}

.sidebar ul {
    border-bottom: 1px solid #101c3c;
}

.sidebar li {
    height: 16px;
    padding-left: 18px;
    line-height: 16px;
    border-bottom: 1px solid #34589f;
}

.sidebar .active {
    height: 18px;
    border-top: 1px solid #88a8e4;
    border-bottom-color: #1c3468;
    background: #4874c8;
    font-style: italic;
}

.logo {
    width: 92px;
    height: 49px;
    margin: auto auto 0 38px;
    overflow: hidden;
    background: #f3f5f6;
}

.logo svg {
    width: 92px;
    height: 49px;
}

.logo-text {
    font: italic bold 34px "Liberation Sans", sans-serif;
    fill: #34809c;
    stroke: #34809c;
}

.logo-mark {
    fill: #34809c;
    stroke: #f3f5f6;
}

/* toolbar */

main {
    flex: 1;
    min-width: 0;
    display: flex;
    flex-direction: column;
    margin-top: 2px;
    border-top: 1px solid #c8d0dc;
    border-right: 1px solid #c4d2e4;
    background: #e9f1f8;
}

.toolbar {
    flex: none;
    display: flex;
    align-items: center;
    height: 21px;
    padding-left: 14px;
    background: linear-gradient(#fff 85%, #e4eaf0);
}

.more {
    width: 38px;
    height: 15px;
    font-size: 10px;
}

.ok {
    margin: 0 9px 0 11px;
}

.command {
    width: 101px;
    height: 15px;
    margin-right: 5px;
}

.tools {
    display: flex;
}

.tools .group {
    display: flex;
    gap: 4px;
    padding: 0 6px 0 5px;
    border-right: 1px solid #c0d4e8;
}

.tools .prev {
    padding-left: 0;
}

.tools .back {
    padding-right: 9px;
}

.tools .session {
    padding-left: 10px;
}

.tools .sheet,
.tools .copyobj,
.tools .calc {
    gap: 7px;
    padding: 0 7px;
}

.tools .first {
    padding-left: 7px;
}

.tools .help {
    border-right: none;
}

h1 {
    flex: none;
    margin: 0;
    padding-left: 12px;
    height: 23px;
    border-top: 1px solid #b0c4d8;
    background: linear-gradient(#c8dae8, #aec6da);
    color: #000;
    font-size: 12px;
    font-style: italic;
    line-height: 20px;
}

/* form rows */

.content {
    flex: 1;
    display: flex;
    flex-direction: column;
    min-height: 0;
    padding: 5px 0 0 2px;
}

.row {
    display: flex;
    align-items: center;
    height: 16px;
    gap: 2px;
}

label {
    height: 14px;
    line-height: 15px;
    white-space: nowrap;
}

.line {
    border-bottom: 1px solid #c0ccd8;
}

.under {
    text-decoration: underline;
}

.grow {
    flex: 1;
}

.w4 { width: 4px; }
.w10 { width: 10px; }
.w14 { width: 14px; }
.w20 { width: 20px; }
.w26 { width: 26px; }
.w34 { width: 34px; }
.w38 { width: 38px; }
.w46 { width: 46px; }
.w52 { width: 52px; }
.w56 { width: 56px; }
.w60 { width: 60px; }
.w64 { width: 64px; }
.w66 { width: 66px; }
.w76 { width: 76px; }
.w78 { width: 78px; }
.w84 { width: 84px; }
.w148 { width: 148px; }

.head-form {
    flex: none;
    height: 81px;
    padding-left: 1px;
}

.change {
    width: 29px;
    height: 15px;
    margin-left: 11px;
}

.address {
    width: 278px;
    margin-left: 2px;
    text-decoration: underline;
}

.address.second {
    margin-left: 146px;
}

.search-label {
    width: 32px;
}

.search {
    width: 154px;
}

.match {
    width: 88px;
}

/* tabs */

.tabs {
    display: flex;
    flex: none;
    width: 827px;
    max-width: 100%;
    padding-left: 8px;
    border-bottom: 2px solid #7ca4d0;
}

.tabs button {
    height: 13px;
    padding: 0 7px 0 14px;
    background: linear-gradient(#d4e4f2, #acc9e4);
    clip-path: polygon(12px 0, 100% 0, 100% 100%, 0 100%);
}

.tabs .active {
    margin-left: -5px;
    padding: 0 10px 0 14px;
    background: #80aad8;
}

.tabs button:last-child {
    padding: 0 12px 0 10px;
    clip-path: polygon(6px 0, 100% 0, 100% 100%, 0 100%);
}

.panel {
    flex: 1;
    width: 827px;
    max-width: 100%;
    padding: 13px 22px 0 4px;
    border: 1px solid #a4c0dc;
    border-top: none;
    background: #dfebf5;
}

.details {
    display: flex;
    padding-left: 2px;
}

.details form {
    width: 470px;
}

.col-a,
.col-b {
    display: flex;
    align-items: center;
    gap: 2px;
}

.col-a {
    width: 154px;
}

.col-b {
    flex: 1;
}

input[type="checkbox"] {
    appearance: none;
    width: 10px;
    height: 10px;
}

.vscroll {
    display: flex;
    flex-direction: column;
    align-items: center;
    flex: none;
    width: 12px;
    background: #f4f8fc;
}

.vscroll button {
    width: 100%;
    height: 12px;
}

.vscroll .thumb {
    width: 100%;
    height: 22px;
    border: 1px solid #a8b4c4;
    background: linear-gradient(90deg, #f0f5fa, #d4e2ee);
}

.vscroll .space,
.hscroll .space {
    flex: 1;
}

.form-scroll {
    height: 98px;
    margin: 0 12px 0 31px;
}

.form-scroll .thumb {
    height: 53px;
}

.article {
    width: 200px;
    height: 90px;
    margin: 2px 0 0;
    padding: 0 8px 0 9px;
    border: 1px solid #a0bcdc;
    background: #d3e4f4;
    min-width: 0;
}

.article legend {
    float: left;
    width: 198px;
    height: 12px;
    margin: 0 -8px 3px -9px;
    padding: 0 5px;
    border-bottom: 1px solid #a0bcdc;
    background: #bcd4e8;
    line-height: 11px;
}

.article .row {
    clear: both;
    gap: 0;
}

.article label {
    width: 105px;
}

.side-buttons {
    display: flex;
    flex-direction: column;
    margin: 1px 0 0 6px;
}

.side-buttons .yellow {
    width: 24px;
    height: 16px;
}

/* item table */

.positions {
    border: 1px solid #6c8ca4;
    border-right-width: 2px;
    margin-top: -2px;
}

h2 {
    margin: 0;
    padding-left: 10px;
    height: 15px;
    background: linear-gradient(#c4d8e8, #a8c4dc);
    font-size: 9px;
    font-weight: normal;
    line-height: 15px;
}

.grid-wrap {
    display: flex;
}

table {
    flex: 1;
    min-width: 0;
    table-layout: fixed;
    border-collapse: collapse;
    background: #fff;
}

.c-sel { width: 12px; }
.c-pos { width: 28px; }
.c-art { width: 64px; }
.c-qty { width: 54px; }
.c-m { width: 18px; }
.c-name { width: 26%; }
.c-bez { width: 28px; }
.c-t { width: 14px; }
.c-typ { width: 24px; }
.c-date { width: 54px; }
.c-cur { width: 28px; }
.c-net { width: 48px; }

th,
td {
    padding: 0;
    height: 15px;
    border-right: 1px solid #c4d0e0;
    border-bottom: 1px solid #c4d0e0;
    line-height: 14px;
    white-space: nowrap;
}

th {
    padding-left: 1px;
    background: linear-gradient(#dfe3ea, #cfd4dd);
    border-right-color: #eef2f6;
    font-weight: normal;
    text-align: left;
}

th:first-child,
.sel {
    background: linear-gradient(90deg, #d8dce2, #b8bec8);
    border-right: 1px solid #98a0ac;
}

.mono,
.num {
    font-family: "Liberation Mono", monospace;
}

.num {
    text-align: right;
}

.num a {
    text-decoration: underline;
}

.ro {
    background: #e7f0f8;
}

td .yellow {
    width: 100%;
    height: 14px;
    border-radius: 2px;
}

.entry {
    display: flex;
    width: 76px;
    margin-right: -12px;
}

.entry input {
    width: 64px;
    height: 14px;
    border: none;
    border-left: 1px solid #24407c;
    background: #fdec9c;
}

.entry button {
    width: 12px;
    height: 14px;
    border: 1px solid #98b0d0;
    background: #dce8f4;
}

.entry svg {
    width: 10px;
    height: 10px;
}

.grid-wrap .vscroll {
    width: 14px;
}

.vscroll .config {
    height: 15px;
    background: #d4d9e1;
}

.hscroll {
    display: flex;
    height: 13px;
    padding: 0 14px 0 105px;
    align-items: center;
    background: #eef4fa;
}

.hscroll button {
    width: 13px;
    height: 13px;
}

.hscroll .thumb {
    width: 10px;
    height: 12px;
    margin-left: 1px;
    border: 1px solid #98a8b8;
    background: #e8f0f6;
}

.actions {
    display: flex;
    padding: 13px 0 0 1px;
    gap: 5px;
}

.actions .group {
    display: flex;
}

.actions .yellow {
    width: 15px;
    height: 15px;
    border-radius: 2px;
}

.actions .coin {
    margin-left: 20px;
}

.actions .hand {
    margin-left: 85px;
}

.actions .ibox {
    margin-left: 100px;
}

.actions .shield {
    margin-left: 6px;
}

.actions .shield .yellow {
    width: 19px;
}

.actions .grid {
    margin-left: 26px;
}

/* floating window */

.palette {
    position: absolute;
    top: 101px;
    right: 40px;
    width: 115px;
    height: 143px;
    border: 1px solid #98a8cc;
    border-radius: 4px 4px 3px 3px;
    background: #e9f1f8;
}

.palette header {
    display: flex;
    align-items: center;
    gap: 3px;
    height: 17px;
    padding: 0 4px;
    border-radius: 3px 3px 0 0;
    background: linear-gradient(#a0b0d8, #7c90c4);
    color: #f0f4fc;
}

.palette header span {
    flex: 1;
}

.palette header button {
    width: 11px;
    height: 11px;
    border: 1px solid #a8b8dc;
}

.palette header button svg {
    width: 9px;
    height: 9px;
    fill: none;
    stroke: #e8eefc;
}

.palette .yellow {
    justify-content: flex-start;
    gap: 1px;
    width: 111px;
    height: 14px;
    margin: 2px 1px 0;
    padding-left: 1px;
    white-space: nowrap;
}
```
